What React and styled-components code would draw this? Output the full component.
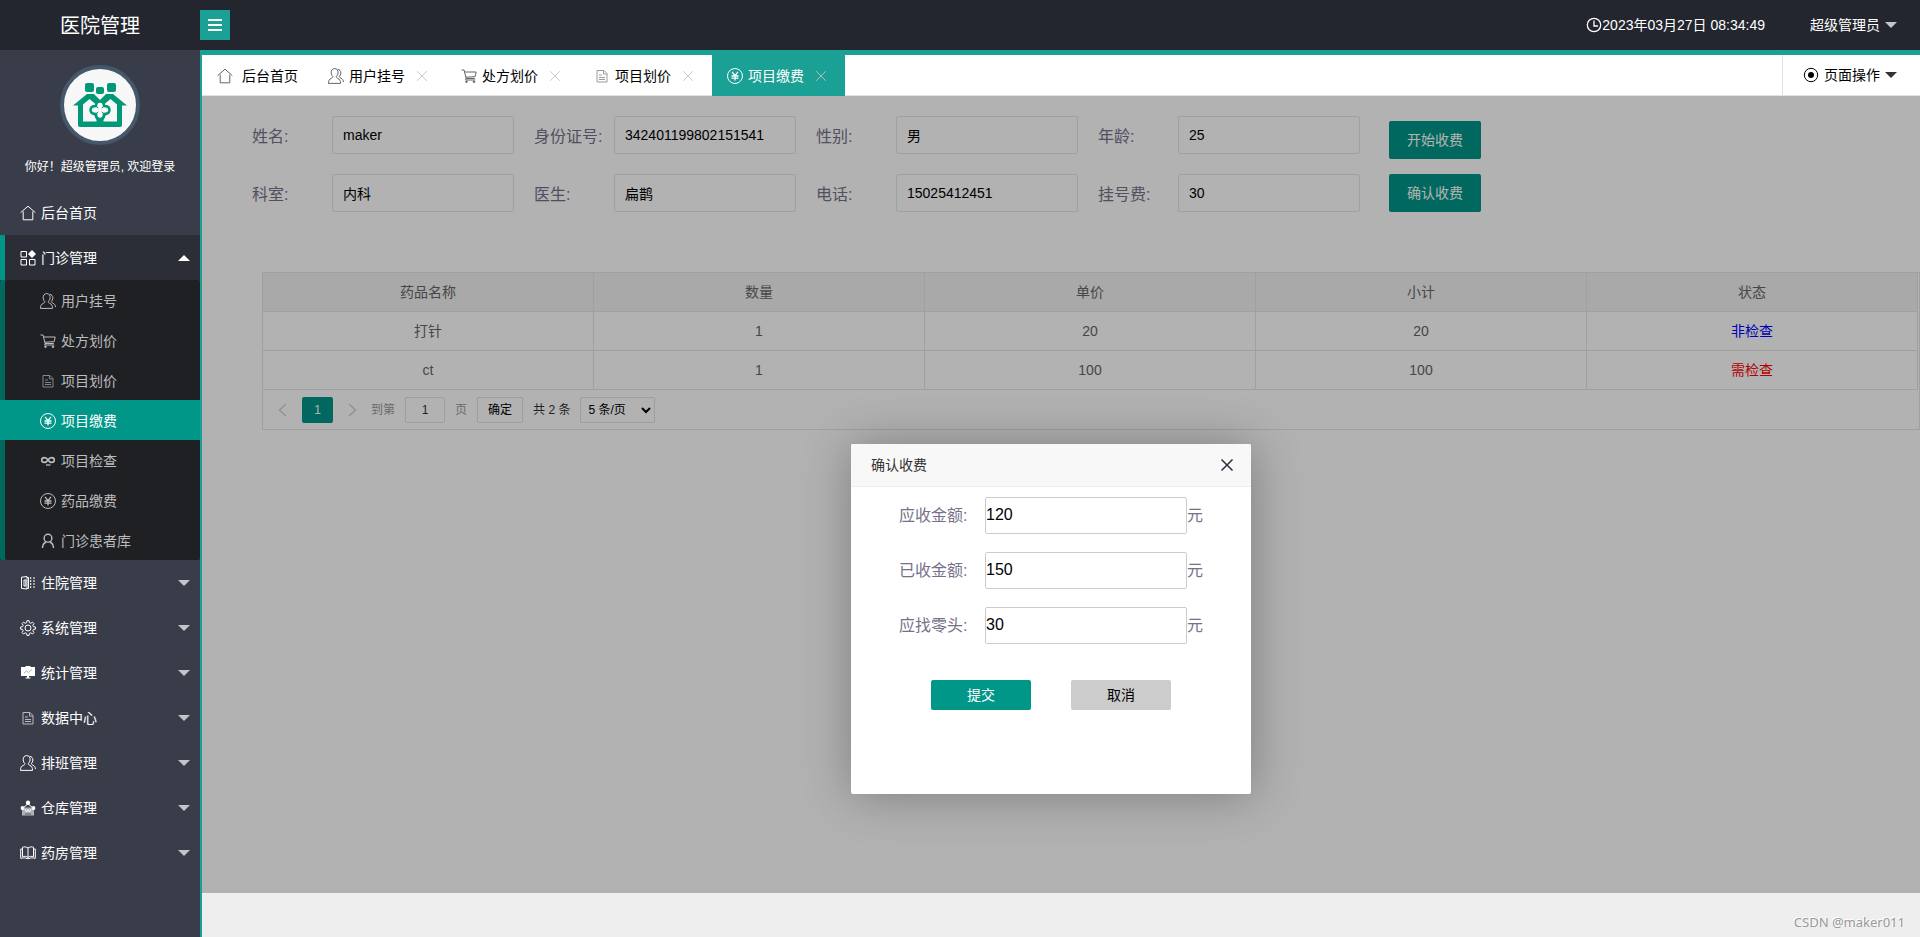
import React from 'react';
import styled, { createGlobalStyle, css } from 'styled-components';

const GlobalStyle = createGlobalStyle`
  * {
    box-sizing: border-box;
  }

  body {
    margin: 0;
    color: #333;
    font: 14px/24px 'Liberation Sans', 'Noto Sans CJK SC', sans-serif;
  }

  a {
    color: inherit;
    text-decoration: none;
  }

  ul {
    list-style: none;
    margin: 0;
    padding: 0;
  }

  button,
  input,
  select {
    font: inherit;
    margin: 0;
  }

  button {
    cursor: pointer;
  }
`;

const icons = {
  home: (
    <>
      <path d="M.7 7.6 8 1.2l7.3 6.4" />
      <path d="M3.2 6.5v8.3h9.6V6.5" />
    </>
  ),
  grid: (
    <>
      <path d="M1 1.500h5.500V7H1zM1 9.500h5.500V15H1zM9.500 9.500H15V15H9.500z" />
      <path d="M12 0l4 4-4 4-4-4z" fill="currentColor" stroke="none" />
    </>
  ),
  users: (
    <>
      <path d="M6.700.6C4.300.6 3 2.400 3.200 4.900c.1 1.700.8 2.800 1.600 3.500.2 1-.4 1.500-1.600 2C1.300 11.300.5 12.400.5 15.400h12c0-3-.8-4.100-2.700-5-1.200-.5-1.700-1-1.500-2 1-.8 1.700-1.900 1.800-3.500C10.300 2.400 9.100.6 6.700.6z" />
      <path d="M9.600 1.300c2 .1 3.400 1.700 3.300 3.800-.1 1.500-.7 2.500-1.500 3.300 0 .9.500 1.300 1.500 1.800 1.700.8 2.400 1.700 2.600 3.900" />
    </>
  ),
  cart: (
    <>
      <path d="M.5 2h2.600l2 8.500h8.700M3.700 4h11.500l-1.100 4.700-9.300.5M5.100 10.500 4.600 12h9.600" />
      <circle cx="5.500" cy="13.800" r=".8" fill="currentColor" />
      <circle cx="13" cy="13.800" r=".8" fill="currentColor" />
    </>
  ),
  file: (
    <g opacity=".65">
      <path d="M3 2.500h7l3 3v8.500H3z" />
      <path d="M9.500 2.500V6H13M5 7h3M5 9.500h6M5 11.500h6" />
    </g>
  ),
  yen: (
    <>
      <circle cx="8" cy="8" r="7.500" />
      <path d="m5 3.800 3 3.900 3-3.900M8 7.700v4.800M4.500 8h7M4.500 10.200h7" strokeWidth="1.300" />
    </>
  ),
  infinity: (
    <>
      <path
        d="M8 7c-1-1.600-2-2.400-3.500-2.400S1.700 5.700 1.700 7s1.200 2.400 2.800 2.400S7 8.600 8 7s2-2.400 3.500-2.400S14.300 5.700 14.300 7s-1.200 2.400-2.800 2.400S9 8.600 8 7z"
        strokeWidth="1.600"
      />
      <path d="M6 12h4.500" strokeWidth="1.300" />
    </>
  ),
  user: (
    <>
      <circle cx="8" cy="5.200" r="3.900" strokeWidth="1.400" />
      <path d="M2.500 15c.1-3.700 1.500-5 3.500-6M13.500 15c-.1-3.700-1.500-5-3.500-6" strokeWidth="1.400" />
    </>
  ),
  ward: (
    <>
      <path d="M1.500 2.200 7 1.500v12.500l-5.500-.6zM4 5h1.800v6H4zM7 2.500h1.500v11H7" />
      <path d="M10.700 2v12M14 2v12" strokeDasharray="2 1" />
    </>
  ),
  gear: (
    <>
      <circle cx="8" cy="8" r="3" />
      <path d="M6.600 2.700 6.900.7h2.200l.3 2 1.400.6 1.700-1.200 1.500 1.500-1.200 1.700.6 1.400 2 .3v2.200l-2 .3-.6 1.400 1.200 1.600-1.500 1.500-1.700-1.200-1.400.6-.3 2H6.900l-.3-2-1.400-.6L3.500 14 2 12.500l1.200-1.600-.6-1.400-2-.3V7l2-.3.6-1.400L2 3.600l1.500-1.500 1.700 1.200z" />
    </>
  ),
  board: (
    <>
      <path d="M1 2h4.500V1h5v1H15v9H1zM7 11h2v1.500h1.500v1h-5v-1H7z" fill="currentColor" stroke="none" />
      <path d="m4 8 2.500-2 2 1.500 3.500-3" stroke="#9a9da5" strokeWidth=".8" />
    </>
  ),
  depot: (
    <>
      <path d="M1.500 7.500h13V10H14v5.500H2V10h-.5z" fill="currentColor" fillOpacity=".6" stroke="none" />
      <circle cx="8" cy="2.800" r="2.200" fill="currentColor" stroke="none" />
      <circle cx="2.500" cy="8" r="1.900" fill="currentColor" stroke="none" />
      <circle cx="13.500" cy="8" r="1.900" fill="currentColor" stroke="none" />
      <path d="M3.500 7.500 8 4l4.500 3.500M5 9l1.500 3L8 9.500 9.500 12 11 9" />
      <path d="M5 14h6" stroke="#5b5f69" />
    </>
  ),
  book: (
    <>
      <path d="M8 3C7 1.900 4 1.500 2.500 2.300v9.400C4 11 7 11.300 8 12.500c1-1.200 4-1.500 5.500-.8V2.300C12 1.500 9 1.900 8 3zM8 3v9.500" />
      <path d="M2.500 4H.7v9.300c2.500-.6 5-.6 6.300.3h2c1.300-.9 3.800-.9 6.300-.3V4h-1.800" />
    </>
  ),
  clock: (
    <>
      <circle cx="8" cy="8" r="6.700" strokeWidth="1.300" />
      <path d="M8 3.500V9h4" strokeWidth="1.300" />
    </>
  ),
  target: (
    <>
      <circle cx="8" cy="8" r="6.700" />
      <circle cx="8" cy="8" r="3" fill="currentColor" stroke="none" />
    </>
  ),
  close: <path d="m2.500 2.500 11 11M13.500 2.500l-11 11" />,
  prev: <path d="m11 2-6.500 6 6.500 6" />,
  next: <path d="m5 2 6.500 6L5 14" />,
  menu: <path d="M1 3h14M1 8h14M1 13h14" strokeWidth="2" />
};

const Icon = ({ name, size = 16, weight = 1 }) => (
  <IconSvg
    width={size}
    height={size}
    viewBox="0 0 16 16"
    fill="none"
    stroke="currentColor"
    strokeWidth={weight}
    aria-hidden="true"
  >
    {icons[name]}
  </IconSvg>
);

const clinicMenu = [
  { icon: 'users', text: '用户挂号' },
  { icon: 'cart', text: '处方划价' },
  { icon: 'file', text: '项目划价' },
  { icon: 'yen', text: '项目缴费', active: true },
  { icon: 'infinity', text: '项目检查' },
  { icon: 'yen', text: '药品缴费' },
  { icon: 'user', text: '门诊患者库' }
];

const menu = [
  { icon: 'home', text: '后台首页', leaf: true },
  { icon: 'grid', text: '门诊管理', children: clinicMenu },
  { icon: 'ward', text: '住院管理' },
  { icon: 'gear', text: '系统管理' },
  { icon: 'board', text: '统计管理' },
  { icon: 'file', text: '数据中心' },
  { icon: 'users', text: '排班管理' },
  { icon: 'depot', text: '仓库管理' },
  { icon: 'book', text: '药房管理' }
];

const tabs = [
  { icon: 'home', text: '后台首页', fixed: true },
  { icon: 'users', text: '用户挂号' },
  { icon: 'cart', text: '处方划价' },
  { icon: 'file', text: '项目划价' },
  { icon: 'yen', text: '项目缴费', active: true }
];

const patientFields = [
  { id: 'name', label: '姓名:', value: 'maker' },
  { id: 'idcard', label: '身份证号:', value: '342401199802151541' },
  { id: 'sex', label: '性别:', value: '男' },
  { id: 'age', label: '年龄:', value: '25' },
  { id: 'dept', label: '科室:', value: '内科' },
  { id: 'doctor', label: '医生:', value: '扁鹊' },
  { id: 'phone', label: '电话:', value: '15025412451' },
  { id: 'fee', label: '挂号费:', value: '30' }
];

const columns = ['药品名称', '数量', '单价', '小计', '状态'];

const rows = [
  { name: '打针', count: 1, price: 20, total: 20, status: '非检查', color: 'blue' },
  { name: 'ct', count: 1, price: 100, total: 100, status: '需检查', color: 'red' }
];

const chargeFields = [
  { id: 'due', label: '应收金额:', value: '120' },
  { id: 'paid', label: '已收金额:', value: '150' },
  { id: 'change', label: '应找零头:', value: '30' }
];

const Logo = () => (
  <svg width="72" height="72" viewBox="4 4 72 72" aria-hidden="true">
    <g fill="#009876">
      <rect x="25" y="18" width="9" height="9" rx="2" />
      <rect x="36" y="22" width="8" height="7" rx="2" />
      <rect x="47" y="18" width="9" height="9" rx="2" />
      <path d="M13 40.500 27 29h7l6 6 6-6h7l14 11.500h-5V60q0 2-2 2H20q-2 0-2-2V40.500z" />
    </g>
    <path d="M23 39.500 29.500 34l6 5-4 6 5 10v1.500H23zM57 39.500 50.500 34l-6 5 4 6-5 10v1.500H57z" fill="#f7f7f7" />
    <path
      d="M40 36.500q4 0 4 4.500 5.500 0 5.500 4t-5.500 4q0 5-4 5t-4-5q-5.500 0-5.500-4t5.500-4q0-4.500 4-4.500z"
      fill="#f7f7f7"
      stroke="#009876"
      strokeWidth="2.500"
    />
    <path d="M36.500 41.500 43.500 48.500M43.500 41.500 36.500 48.500" stroke="#009876" strokeWidth="1" />
    <path d="M40 41v8M36 45h8" stroke="#f7f7f7" strokeWidth="3" />
  </svg>
);

const Sidebar = () => (
  <SidebarWrapper>
    <Profile>
      <Avatar>
        <Logo />
      </Avatar>
      <Greeting>你好！超级管理员, 欢迎登录</Greeting>
    </Profile>
    <nav>
      <ul>
        {menu.map(item => (
          <li key={item.text}>
            <MenuLink href="#" $open={!!item.children}>
              <Icon name={item.icon} />
              <MenuText>{item.text}</MenuText>
              {!item.leaf && <Caret $up={!!item.children} />}
            </MenuLink>
            {item.children && (
              <SubMenu>
                {item.children.map(child => (
                  <li key={child.text}>
                    <SubMenuLink href="#" $active={child.active}>
                      <Icon name={child.icon} />
                      {child.text}
                    </SubMenuLink>
                  </li>
                ))}
              </SubMenu>
            )}
          </li>
        ))}
      </ul>
    </nav>
  </SidebarWrapper>
);

const TabBar = () => (
  <TabBarWrapper>
    {tabs.map(tab => (
      <Tab key={tab.text} $active={tab.active}>
        <TabLink href="#" $wide={tab.fixed} $active={tab.active}>
          <Icon name={tab.icon} />
          {tab.text}
        </TabLink>
        {!tab.fixed && (
          <TabClose type="button" aria-label="关闭">
            <Icon name="close" size={14} />
          </TabClose>
        )}
      </Tab>
    ))}
    <PageActions type="button">
      <Icon name="target" />
      页面操作
      <Caret $color="#333" />
    </PageActions>
  </TabBarWrapper>
);

const PatientForm = () => (
  <PatientFormWrapper>
    <FieldGrid>
      {patientFields.map(field => (
        <Field key={field.id}>
          <FieldLabel htmlFor={field.id}>{field.label}</FieldLabel>
          <FieldInput id={field.id} type="text" defaultValue={field.value} />
        </Field>
      ))}
    </FieldGrid>
    <FormButtons>
      <FormButton type="button">开始收费</FormButton>
      <FormButton type="button">确认收费</FormButton>
    </FormButtons>
  </PatientFormWrapper>
);

const ChargeTable = () => (
  <TableBox>
    <Table>
      <thead>
        <tr>
          {columns.map(column => (
            <th key={column}>{column}</th>
          ))}
        </tr>
      </thead>
      <tbody>
        {rows.map(row => (
          <tr key={row.name}>
            <td>{row.name}</td>
            <td>{row.count}</td>
            <td>{row.price}</td>
            <td>{row.total}</td>
            <td>
              <Status $color={row.color}>{row.status}</Status>
            </td>
          </tr>
        ))}
      </tbody>
    </Table>
    <Pager>
      <PagerArrow type="button" aria-label="上一页">
        <Icon name="prev" weight={1.5} />
      </PagerArrow>
      <PagerCurrent>1</PagerCurrent>
      <PagerArrow type="button" aria-label="下一页">
        <Icon name="next" weight={1.5} />
      </PagerArrow>
      <PagerSkip>
        <label htmlFor="page">到第</label>
        <PagerInput id="page" type="text" defaultValue="1" />
        页
      </PagerSkip>
      <PagerButton type="button">确定</PagerButton>
      <span>共 2 条</span>
      <PagerSelect aria-label="每页条数" defaultValue="5">
        <option value="5">5 条/页</option>
        <option value="10">10 条/页</option>
      </PagerSelect>
    </Pager>
  </TableBox>
);

const ChargeDialog = () => (
  <Dialog role="dialog" aria-labelledby="charge-title">
    <DialogHeader>
      <span id="charge-title">确认收费</span>
      <DialogClose type="button" aria-label="关闭">
        <Icon name="close" weight={1.5} />
      </DialogClose>
    </DialogHeader>
    <DialogBody>
      {chargeFields.map(field => (
        <ChargeRow key={field.id}>
          <ChargeLabel htmlFor={field.id}>{field.label}</ChargeLabel>
          <ChargeInput id={field.id} type="text" defaultValue={field.value} />
          元
        </ChargeRow>
      ))}
    </DialogBody>
    <DialogFooter>
      <DialogButton type="button" $primary>
        提交
      </DialogButton>
      <DialogButton type="button">取消</DialogButton>
    </DialogFooter>
  </Dialog>
);

const App = () => (
  <Page>
    <GlobalStyle />
    <Header>
      <Brand>医院管理</Brand>
      <MenuToggle type="button" aria-label="菜单">
        <Icon name="menu" />
      </MenuToggle>
      <Clock>
        <Icon name="clock" />
        2023年03月27日 08:34:49
      </Clock>
      <UserMenu href="#">
        超级管理员
        <Caret />
      </UserMenu>
    </Header>
    <Body>
      <Sidebar />
      <Main>
        <TabBar />
        <Content>
          <PatientForm />
          <ChargeTable />
          <Shade />
          <ChargeDialog />
        </Content>
        <Footer>CSDN @maker011</Footer>
      </Main>
    </Body>
  </Page>
);

export default App;

const IconSvg = styled.svg`
  display: block;
  flex: none;
`;

const Page = styled.div`
  display: flex;
  flex-direction: column;
  min-height: 100vh;
`;

const Header = styled.header`
  display: flex;
  align-items: center;
  height: 50px;
  padding-right: 23px;
  background: #23262e;
  color: #fff;
`;

const Brand = styled.div`
  width: 200px;
  padding-top: 2px;
  text-align: center;
  font-size: 20px;
`;

const MenuToggle = styled.button`
  display: flex;
  align-items: center;
  justify-content: center;
  width: 30px;
  height: 30px;
  padding: 0;
  border: 0;
  background: #1aa094;
  color: #fff;
`;

const Clock = styled.div`
  display: flex;
  align-items: center;
  margin-left: auto;
`;

const UserMenu = styled.a`
  display: flex;
  align-items: center;
  gap: 5px;
  margin-left: 45px;
`;

const Caret = styled.i`
  border: 6px solid transparent;
  ${props =>
    props.$up
      ? css`
          border-bottom-color: #fff;
          border-top-width: 0;
        `
      : css`
          border-top-color: ${props.$color || '#c4c5c8'};
          border-bottom-width: 0;
        `};
`;

const Body = styled.div`
  display: grid;
  grid-template-columns: 200px 1fr;
  flex: 1;
`;

const SidebarWrapper = styled.aside`
  background: #393d49;
  color: #fff;
`;

const Profile = styled.div`
  display: flex;
  flex-direction: column;
  align-items: center;
  height: 140px;
  padding-top: 15px;
`;

const Avatar = styled.div`
  width: 80px;
  height: 80px;
  border: 4px solid #44576b;
  border-radius: 50%;
  background: #f7f7f7;
`;

const Greeting = styled.p`
  margin: 10px 0 0;
  font-size: 12px;
  white-space: nowrap;
`;

const MenuLink = styled.a`
  display: flex;
  align-items: center;
  gap: 5px;
  height: 45px;
  padding: 0 10px 0 20px;
  ${props =>
    props.$open &&
    css`
      background: #2b2e37;
      box-shadow: inset 5px 0 #009688;
    `};
`;

const MenuText = styled.span`
  flex: 1;
`;

const SubMenu = styled.ul`
  border-radius: 2px;
  background: #1f2024;
  box-shadow: inset 5px 0 #00695f;
`;

const SubMenuLink = styled.a`
  display: flex;
  align-items: center;
  gap: 5px;
  height: 40px;
  padding: 2px 0 0 40px;
  color: ${props => (props.$active ? '#fff' : '#bcbcbd')};
  background: ${props => (props.$active ? '#009688' : 'transparent')};
`;

const Main = styled.main`
  display: flex;
  flex-direction: column;
  min-width: 0;
  border-top: 5px solid #1aa094;
  border-left: 2px solid #1aa094;
`;

const TabBarWrapper = styled.div`
  display: flex;
  height: 41px;
  background: #fff;
  border-bottom: 1px solid #e2e2e2;
  color: #000;
`;

const Tab = styled.div`
  display: flex;
  align-items: center;
  gap: 10px;
  height: 41px;
  padding: 0 15px;
  ${props =>
    props.$active &&
    css`
      background: #1aa094;
      color: #fff;
    `};
`;

const TabLink = styled.a`
  display: flex;
  align-items: center;
  gap: ${props => (props.$wide ? '9px' : '5px')};

  svg {
    opacity: ${props => (props.$active ? 1 : 0.6)};
  }
`;

const TabClose = styled.button`
  width: 16px;
  padding: 0;
  border: 0;
  background: none;
  color: #c2c2c2;
`;

const PageActions = styled.button`
  display: flex;
  align-items: center;
  gap: 5px;
  margin-left: auto;
  padding: 0 23px 0 20px;
  border: 0;
  border-left: 1px solid #e2e2e2;
  background: #fff;
  color: #000;
`;

const Content = styled.section`
  position: relative;
  flex: 1;
  padding: 20px 0 0 50px;
  background: #fff;
`;

const PatientFormWrapper = styled.form`
  display: flex;
  gap: 29px;
`;

const FieldGrid = styled.div`
  display: grid;
  grid-template-columns: repeat(4, auto);
  gap: 20px;
`;

const Field = styled.div`
  display: flex;
  align-items: center;
`;

const FieldLabel = styled.label`
  width: 80px;
  padding-top: 3px;
  color: #76718a;
  font-size: 16px;
`;

const FieldInput = styled.input`
  width: 182px;
  height: 38px;
  padding: 0 10px;
  border: 1px solid #e6e6e6;
  border-radius: 2px;
  background: #fff;
  color: #000;
`;

const FormButtons = styled.div`
  display: flex;
  flex-direction: column;
  justify-content: flex-end;
  gap: 15px;
`;

const FormButton = styled.button`
  height: 38px;
  padding: 0 18px;
  border: 0;
  border-radius: 2px;
  background: #009688;
  color: #fff;
`;

const TableBox = styled.div`
  margin: 60px 0 0 10px;
  border: 1px solid #e6e6e6;
`;

const Table = styled.table`
  width: calc(100% - 1px);
  table-layout: fixed;
  border-collapse: separate;
  border-spacing: 0;
  color: #666;
  text-align: center;

  th,
  td {
    height: 39px;
    padding: 0;
    border-right: 1px solid #e6e6e6;
    border-bottom: 1px solid #e6e6e6;
    font-weight: 400;
  }

  th {
    background: #f2f2f2;
  }
`;

const Status = styled.span`
  color: ${props => props.$color};
`;

const Pager = styled.div`
  display: flex;
  align-items: center;
  gap: 10px;
  height: 39px;
  padding-left: 11px;
  font-size: 12px;
`;

const PagerArrow = styled.button`
  display: flex;
  justify-content: center;
  width: 18px;
  padding: 0;
  border: 0;
  background: none;
  color: #d2d2d2;
`;

const PagerCurrent = styled.span`
  width: 31px;
  border-radius: 2px;
  background: #009688;
  color: #fff;
  line-height: 26px;
  text-align: center;
`;

const PagerSkip = styled.div`
  display: flex;
  align-items: center;
  gap: 10px;
  color: #999;
`;

const PagerInput = styled.input`
  width: 40px;
  height: 26px;
  padding: 0;
  border: 1px solid #e2e2e2;
  border-radius: 2px;
  color: #333;
  text-align: center;
`;

const PagerButton = styled.button`
  height: 26px;
  padding: 0 10px;
  border: 1px solid #e2e2e2;
  border-radius: 2px;
  background: #fff;
  color: #000;
`;

const PagerSelect = styled.select`
  width: 75px;
  height: 26px;
  padding: 0 3px;
  border: 1px solid #e2e2e2;
  border-radius: 2px;
  background: #fff;
  color: #000;
`;

const Shade = styled.div`
  position: absolute;
  inset: 0;
  background: rgba(0, 0, 0, 0.3);
`;

const Dialog = styled.div`
  position: absolute;
  top: 348px;
  left: calc(50% - 210px);
  width: 400px;
  min-height: 350px;
  border-radius: 2px;
  background: #fff;
  box-shadow: 1px 1px 50px rgba(0, 0, 0, 0.3);
`;

const DialogHeader = styled.div`
  display: flex;
  align-items: center;
  justify-content: space-between;
  height: 43px;
  padding: 0 16px 0 20px;
  border-bottom: 1px solid #eee;
  border-radius: 2px 2px 0 0;
  background: #f8f8f8;
`;

const DialogClose = styled.button`
  padding: 0;
  border: 0;
  background: none;
  color: #2e2d3c;
`;

const DialogBody = styled.div`
  display: grid;
  gap: 18px;
  padding: 10px 0 0 48px;
`;

const ChargeRow = styled.div`
  display: flex;
  align-items: center;
  color: #76718a;
  font-size: 16px;
`;

const ChargeLabel = styled.label`
  width: 86px;
`;

const ChargeInput = styled.input`
  width: 202px;
  height: 37px;
  padding: 0 0 2px;
  border: 1px solid #ccc;
  border-radius: 2px;
  color: #000;
`;

const DialogFooter = styled.div`
  display: flex;
  justify-content: center;
  gap: 40px;
  padding-top: 36px;
`;

const DialogButton = styled.button`
  width: 100px;
  height: 30px;
  padding: 0;
  border: 0;
  border-radius: 2px;
  background: ${props => (props.$primary ? '#009688' : '#ccc')};
  color: ${props => (props.$primary ? '#fff' : '#000')};
`;

const Footer = styled.footer`
  height: 44px;
  padding: 17px 15px 0 0;
  background: #eee;
  color: #999;
  font-family: 'Noto Sans', sans-serif;
  font-size: 13px;
  text-align: right;
  text-shadow: -1px -1px #fff;
`;
